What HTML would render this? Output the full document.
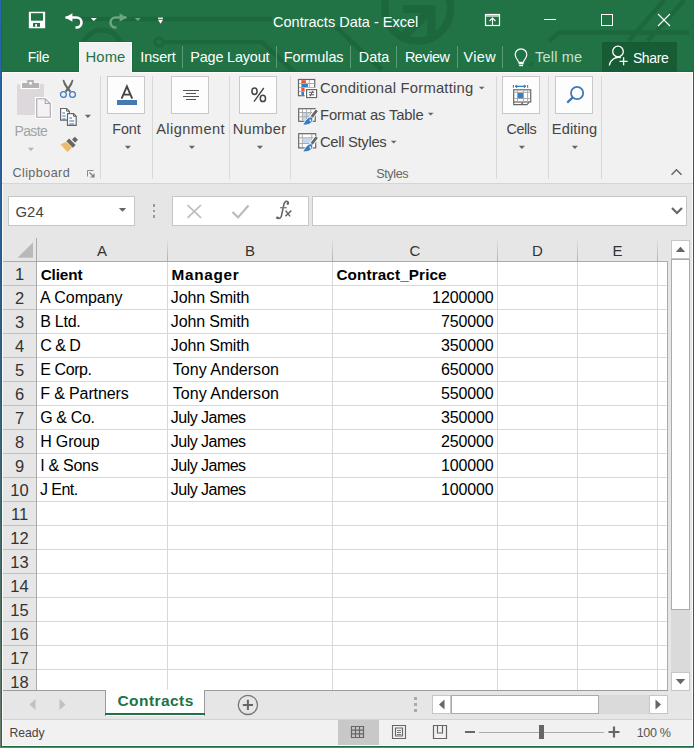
<!DOCTYPE html><html><head><meta charset="utf-8"><style>
html,body{margin:0;padding:0;width:694px;height:748px;overflow:hidden;position:relative}
.t{position:absolute;white-space:nowrap;line-height:20px;font-family:"Liberation Sans",sans-serif}
svg{overflow:visible}
</style></head><body>
<div style="position:absolute;left:0px;top:0px;width:694px;height:748px;background:linear-gradient(#2c66b0 0%,#2a5f8a 40%,#4d6e63 80%,#6f7f70 100%)"></div>
<div style="position:absolute;left:1px;top:0px;width:693px;height:747px;background:#1d6b40"></div>
<div style="position:absolute;left:2px;top:0px;width:691px;height:72px;background:#217346"></div>
<svg style="position:absolute;left:2px;top:0px;" width="691" height="72" viewBox="0 0 691 72">
<g fill="none" stroke="#1d673d" stroke-width="4.5" transform="translate(-2,0)">
<path d="M76 19 H272"/>
<circle cx="102" cy="50" r="20" stroke-width="5"/>
<circle cx="159" cy="42" r="4" stroke-width="3"/>
<path d="M163 42 H262 L294 72"/>
<path d="M336 27 L382 70"/>
<path d="M549 41 L559 32.5 H689"/>
<path d="M628.8 41 L664.3 0"/>
<path d="M647.6 41 L684.3 0"/>
<circle cx="417.7" cy="8" r="33" stroke-width="7.5"/>
<path d="M401 39 L431 9" stroke-width="8.5"/>
<path d="M403 9 H431.3 V37.6" stroke-width="8"/>
</g></svg>
<svg style="position:absolute;left:29px;top:12px;" width="16" height="16" viewBox="0 0 16 16"><path d="M0.5 0.5 H15.5 V15.5 H0.5 Z" fill="none" stroke="#ffffff" stroke-width="1.3"/>
<rect x="0" y="0" width="16" height="16" rx="1" fill="#ffffff"/>
<rect x="2" y="1.2" width="12" height="7.5" fill="#217346"/>
<rect x="4" y="11" width="7" height="3.8" fill="#217346"/>
<rect x="6.2" y="12.1" width="1.8" height="2.7" fill="#ffffff"/></svg>
<svg style="position:absolute;left:62px;top:10px;" width="24" height="20" viewBox="0 0 24 20"><path d="M3.5 7.5 H14.5 A5 5 0 0 1 14.5 17.5 H13.5" fill="none" stroke="#ffffff" stroke-width="2.6"/>
<path d="M3.2 7.5 L10.4 3.2 V11.8 Z" fill="#ffffff"/></svg>
<svg style="position:absolute;left:90px;top:17px;" width="8" height="5" viewBox="0 0 8 5"><path d="M0.8 1 H6.9 L3.85 4 Z" fill="#ffffff"/></svg>
<svg style="position:absolute;left:106px;top:10px;" width="24" height="20" viewBox="0 0 24 20"><path d="M20.5 7.5 H9.5 A5 5 0 0 0 9.5 17.5 H10.5" fill="none" stroke="#6aa583" stroke-width="2.6"/>
<path d="M20.8 7.5 L13.6 3.2 V11.8 Z" fill="#6aa583"/></svg>
<svg style="position:absolute;left:134px;top:17px;" width="8" height="5" viewBox="0 0 8 5"><path d="M0.8 1 H6.9 L3.85 4 Z" fill="#6aa583"/></svg>
<svg style="position:absolute;left:157px;top:16px;" width="8" height="9" viewBox="0 0 8 9"><rect x="1" y="1.6" width="5" height="1.2" fill="#ffffff"/><path d="M1 3.8 H6 L3.5 7.8 Z" fill="#ffffff"/></svg>
<div class="t" style="left:273.00px;top:12.18px;font-size:14.5px;font-weight:normal;color:#ffffff;letter-spacing:0.014px;">Contracts Data - Excel</div>
<svg style="position:absolute;left:484px;top:13px;" width="17" height="14" viewBox="0 0 17 14"><rect x="1.5" y="1.5" width="14" height="11" fill="none" stroke="#ffffff" stroke-width="1.2"/>
<path d="M1.5 3 H15.5" stroke="#ffffff" stroke-width="1.2"/>
<path d="M8.5 4.5 V12.5 M5.5 8 L8.5 5 L11.5 8" fill="none" stroke="#ffffff" stroke-width="1.1"/></svg>
<div style="position:absolute;left:544px;top:19px;width:12px;height:1px;background:#fff"></div>
<div style="position:absolute;left:601px;top:14px;width:12px;height:12px;border:1px solid #fff;box-sizing:border-box"></div>
<svg style="position:absolute;left:657px;top:13px;" width="14" height="14" viewBox="0 0 14 14"><path d="M1 1 L13 13 M13 1 L1 13" stroke="#ffffff" stroke-width="1.1"/></svg>
<div class="t" style="left:27.70px;top:46.85px;font-size:14px;font-weight:normal;color:#ffffff;letter-spacing:-0.267px;">File</div>
<div style="position:absolute;left:2px;top:71px;width:691px;height:1px;background:#1c6a3f"></div>
<div style="position:absolute;left:78px;top:41px;width:55px;height:31px;background:#1c6a3f"></div>
<div style="position:absolute;left:79px;top:42px;width:53px;height:31px;background:#f1f1f1;border:1px solid #fcfcfc;border-bottom:none;box-sizing:border-box"></div>
<div class="t" style="left:85.60px;top:46.57px;font-size:14.8px;font-weight:normal;color:#217346;letter-spacing:0.067px;">Home</div>
<div class="t" style="left:140.30px;top:46.71px;font-size:14.4px;font-weight:normal;color:#ffffff;letter-spacing:-0.100px;">Insert</div>
<div class="t" style="left:190.30px;top:46.71px;font-size:14.4px;font-weight:normal;color:#ffffff;letter-spacing:-0.160px;">Page Layout</div>
<div class="t" style="left:283.80px;top:46.71px;font-size:14.4px;font-weight:normal;color:#ffffff;letter-spacing:-0.029px;">Formulas</div>
<div class="t" style="left:358.80px;top:46.71px;font-size:14.4px;font-weight:normal;color:#ffffff;letter-spacing:0.033px;">Data</div>
<div class="t" style="left:404.90px;top:46.71px;font-size:14.4px;font-weight:normal;color:#ffffff;letter-spacing:-0.440px;">Review</div>
<div class="t" style="left:463.60px;top:46.71px;font-size:14.4px;font-weight:normal;color:#ffffff;letter-spacing:0.367px;">View</div>
<div style="position:absolute;left:182px;top:46px;width:1px;height:22px;background:#5a9a75"></div>
<div style="position:absolute;left:276px;top:46px;width:1px;height:22px;background:#5a9a75"></div>
<div style="position:absolute;left:350px;top:46px;width:1px;height:22px;background:#5a9a75"></div>
<div style="position:absolute;left:396px;top:46px;width:1px;height:22px;background:#5a9a75"></div>
<div style="position:absolute;left:457px;top:46px;width:1px;height:22px;background:#5a9a75"></div>
<div style="position:absolute;left:502px;top:46px;width:1px;height:22px;background:#5a9a75"></div>
<svg style="position:absolute;left:512px;top:46px;" width="22" height="22" viewBox="0 0 22 22"><path d="M6.5 14.5 C6 12 3 10.5 3 6.8 A5.8 5.8 0 0 1 14.6 6.8 C14.6 10.5 11.6 12 11.2 14.5" fill="none" stroke="#ffffff" stroke-width="1.2" transform="translate(0.2,1.8)"/>
<rect x="6.6" y="15.8" width="5" height="2.6" fill="#ffffff"/>
<rect x="7.2" y="19" width="3.8" height="1.2" fill="#ffffff"/>
<path d="M16 19.8 L21 14.5 V19.8 Z" fill="#1c6840"/></svg>
<div class="t" style="left:535.00px;top:46.64px;font-size:14.6px;font-weight:normal;color:#c9e0d1;letter-spacing:0.167px;">Tell me</div>
<div style="position:absolute;left:602px;top:42px;width:75px;height:30px;background:#185c36"></div>
<svg style="position:absolute;left:606px;top:44px;" width="22" height="24" viewBox="0 0 22 24"><circle cx="12" cy="7.5" r="5.3" fill="none" stroke="#ffffff" stroke-width="1.3"/>
<path d="M3.3 21.5 A9.5 9.5 0 0 1 14.8 13.5" fill="none" stroke="#ffffff" stroke-width="1.3"/>
<path d="M17.6 13.3 V21.3 M13.6 17.3 H21.6" stroke="#ffffff" stroke-width="1.3"/></svg>
<div class="t" style="left:632.90px;top:47.65px;font-size:14px;font-weight:normal;color:#ffffff;letter-spacing:-0.375px;">Share</div>
<div style="position:absolute;left:2px;top:72px;width:691px;height:112px;background:#f1f1f1"></div>
<div style="position:absolute;left:2px;top:72px;width:77px;height:1px;background:#fcfcfc"></div>
<div style="position:absolute;left:132px;top:72px;width:561px;height:1px;background:#fcfcfc"></div>
<div style="position:absolute;left:2px;top:72px;width:1px;height:112px;background:#fcfcfc"></div>
<div style="position:absolute;left:692px;top:72px;width:1px;height:112px;background:#fcfcfc"></div>
<div style="position:absolute;left:2px;top:183px;width:691px;height:1px;background:#d6d6d6"></div>
<div style="position:absolute;left:100px;top:76px;width:1px;height:103px;background:#d8d8d8"></div>
<div style="position:absolute;left:152px;top:76px;width:1px;height:103px;background:#d8d8d8"></div>
<div style="position:absolute;left:229px;top:76px;width:1px;height:103px;background:#d8d8d8"></div>
<div style="position:absolute;left:290px;top:76px;width:1px;height:103px;background:#d8d8d8"></div>
<div style="position:absolute;left:496px;top:76px;width:1px;height:103px;background:#d8d8d8"></div>
<div style="position:absolute;left:548px;top:76px;width:1px;height:103px;background:#d8d8d8"></div>
<div style="position:absolute;left:601px;top:76px;width:1px;height:103px;background:#d8d8d8"></div>
<svg style="position:absolute;left:14px;top:78px;" width="40" height="42" viewBox="0 0 40 42">
<rect x="3" y="6" width="27" height="31" rx="1.5" fill="#dcd8db"/>
<rect x="6.5" y="4.5" width="19" height="6.5" fill="#ffffff"/>
<rect x="8" y="5" width="17" height="5" fill="#b4b2b4"/>
<rect x="13.2" y="2" width="6.7" height="4" fill="#b4b2b4"/>
<rect x="15.3" y="4" width="2.5" height="2.5" fill="#ffffff"/>
<path d="M21.7 19.7 H31.6 L37.3 25 V40.2 H21.7 Z" fill="#ffffff" stroke="#ffffff" stroke-width="1.6"/>
<path d="M22.7 20.7 H31.3 L36.3 25.5 V39.2 H22.7 Z" fill="#f5f1f6" stroke="#a9a9a9" stroke-width="1.1"/>
<path d="M31.3 20.7 V25.5 H36.3" fill="none" stroke="#a9a9a9" stroke-width="1.1"/>
</svg>
<div class="t" style="left:14.50px;top:120.85px;font-size:14px;font-weight:normal;color:#a3a3a3;letter-spacing:-0.650px;">Paste</div>
<svg style="position:absolute;left:27px;top:147px;" width="8" height="5" viewBox="0 0 8 5"><path d="M0.8 0.8 H7 L3.9 4 Z" fill="#b5b5b5"/></svg>
<svg style="position:absolute;left:58px;top:78px;" width="20" height="22" viewBox="0 0 20 22">
<path d="M4.6 1.8 L6.2 1.9 C7.4 5 9.2 8 11.4 10.6 L8.8 13.9 L6.6 13.2 L8.6 10.8 C6.5 8 5 5 4.6 1.8 Z" fill="#666"/>
<path d="M15.4 1.8 L13.8 1.9 C12.6 5 10.8 8 8.6 10.6 L11.2 13.9 L13.4 13.2 L11.4 10.8 C13.5 8 15 5 15.4 1.8 Z" fill="#666"/>
<circle cx="5.4" cy="16.5" r="2.9" fill="none" stroke="#3d7cc4" stroke-width="1.3"/>
<circle cx="14.5" cy="16.5" r="2.9" fill="none" stroke="#3d7cc4" stroke-width="1.3"/>
</svg>
<svg style="position:absolute;left:59px;top:107px;" width="20" height="20" viewBox="0 0 20 20">
<path d="M1.6 1.5 H7.6 L10.3 4.2 V13.2 H1.6 Z" fill="#fff" stroke="#666" stroke-width="1.2"/>
<path d="M7.6 1.5 V4.2 H10.3" fill="none" stroke="#666" stroke-width="1"/>
<path d="M3.4 6 H6 M3.4 9 H6.6 M3.4 12 H6.6" stroke="#3d6fb0" stroke-width="1"/>
<path d="M8.5 6.6 H14.5 L17.2 9.3 V18.3 H8.5 Z" fill="#fff" stroke="#666" stroke-width="1.2"/>
<path d="M14.5 6.6 V9.3 H17.2" fill="none" stroke="#666" stroke-width="1"/>
<path d="M10.3 11 H13 M10.3 14 H15.2 M10.3 17 H15.2" stroke="#3d6fb0" stroke-width="1"/>
</svg>
<svg style="position:absolute;left:84px;top:114px;" width="8" height="5" viewBox="0 0 8 5"><path d="M0.8 0.8 H7 L3.9 4 Z" fill="#666"/></svg>
<svg style="position:absolute;left:58px;top:135px;" width="20" height="19" viewBox="0 0 20 19">
<path d="M2.5 9.3 L8 7 L14.1 12.4 L9.4 17 Z" fill="#e9bb6d"/>
<path d="M11.16 3.44 L17.66 9.94 L14.84 12.76 L8.34 6.26 Z" fill="#666"/>
<path d="M16.85 1.73 L19.97 4.85 L17.15 7.67 L14.03 4.55 Z" fill="#666"/>
</svg>
<div class="t" style="left:12.40px;top:163.33px;font-size:12.6px;font-weight:normal;color:#666666;letter-spacing:0.425px;">Clipboard</div>
<svg style="position:absolute;left:86px;top:169px;" width="10" height="10" viewBox="0 0 10 10"><path d="M1.5 1.5 H7.5 M1.5 1.5 V7.5" stroke="#888" stroke-width="1"/><path d="M3.5 3.5 L8 8 M8 4.5 V8 H4.5" fill="none" stroke="#777" stroke-width="1.1"/></svg>
<div style="position:absolute;left:107px;top:76px;width:38px;height:38px;background:#fdfdfd;border:1px solid #c8c8c8;box-sizing:border-box"></div>
<div style="position:absolute;left:171px;top:76px;width:38px;height:38px;background:#fdfdfd;border:1px solid #c8c8c8;box-sizing:border-box"></div>
<div style="position:absolute;left:239px;top:76px;width:38px;height:38px;background:#fdfdfd;border:1px solid #c8c8c8;box-sizing:border-box"></div>
<div style="position:absolute;left:502px;top:76px;width:38px;height:38px;background:#fdfdfd;border:1px solid #c8c8c8;box-sizing:border-box"></div>
<div style="position:absolute;left:555px;top:76px;width:38px;height:38px;background:#fdfdfd;border:1px solid #c8c8c8;box-sizing:border-box"></div>
<svg style="position:absolute;left:116px;top:84px;" width="22" height="22" viewBox="0 0 22 22"><path d="M5.6 14.6 L10.9 2.4 L16.2 14.6 M7.4 10.6 H14.4" fill="none" stroke="#444" stroke-width="1.9"/>
<rect x="1" y="16" width="20" height="5" fill="#4479b4"/></svg>
<div class="t" style="left:112.20px;top:118.85px;font-size:14.3px;font-weight:normal;color:#444444;letter-spacing:0.000px;">Font</div>
<svg style="position:absolute;left:180px;top:86px;" width="22" height="16" viewBox="0 0 22 16"><path d="M3 4.5 H19 M6 7.5 H16 M3 10.5 H19 M6 13.5 H16" stroke="#555" stroke-width="1.1"/></svg>
<div class="t" style="left:156.20px;top:118.74px;font-size:14.6px;font-weight:normal;color:#444444;letter-spacing:0.438px;">Alignment</div>
<svg style="position:absolute;left:248px;top:85px;" width="20" height="20" viewBox="0 0 20 20"><ellipse cx="6.5" cy="6.2" rx="2.6" ry="3.2" fill="none" stroke="#444" stroke-width="1.5"/>
<ellipse cx="14.9" cy="13.4" rx="2.6" ry="3.2" fill="none" stroke="#444" stroke-width="1.5"/>
<path d="M15.8 3 L6 16.6" stroke="#444" stroke-width="1.3"/></svg>
<div class="t" style="left:232.70px;top:118.74px;font-size:14.6px;font-weight:normal;color:#444444;letter-spacing:0.280px;">Number</div>
<svg style="position:absolute;left:124px;top:145px;" width="8" height="5" viewBox="0 0 8 5"><path d="M0.8 0.8 H7 L3.9 4 Z" fill="#666"/></svg>
<svg style="position:absolute;left:188px;top:145px;" width="8" height="5" viewBox="0 0 8 5"><path d="M0.8 0.8 H7 L3.9 4 Z" fill="#666"/></svg>
<svg style="position:absolute;left:256px;top:145px;" width="8" height="5" viewBox="0 0 8 5"><path d="M0.8 0.8 H7 L3.9 4 Z" fill="#666"/></svg>
<svg style="position:absolute;left:296px;top:77px;" width="24" height="24" viewBox="0 0 24 24">
<rect x="2.5" y="2.5" width="16.2" height="16.2" fill="#fff" stroke="#666" stroke-width="1.2"/>
<path d="M5.5 3 V18.5 M13.3 3 V18.5 M3 6.5 H18.5 M3 10.5 H18.5 M3 14.5 H18.5" stroke="#aaa" stroke-width="1"/>
<rect x="5.9" y="3.2" width="4" height="2.8" fill="#e05a2b"/>
<rect x="5.9" y="7" width="6" height="3" fill="#3b7cc1"/>
<rect x="5.9" y="11" width="3" height="3" fill="#e05a2b"/>
<rect x="5.9" y="15" width="2.2" height="3" fill="#3b7cc1"/>
<rect x="9.4" y="11.6" width="11.5" height="9.7" fill="#fff" stroke="#ffffff" stroke-width="1.5"/>
<rect x="10.6" y="12.6" width="10" height="8" fill="#fff" stroke="#666" stroke-width="1.2"/>
<path d="M13 15.3 H18.2 M13 17.8 H18.2 M17 13.8 L14.2 19.4" stroke="#555" stroke-width="1"/>
</svg>
<svg style="position:absolute;left:296px;top:106px;" width="26" height="24" viewBox="0 0 26 24"><rect x="2.7" y="2.7" width="16.5" height="12.6" fill="#fff" stroke="#666" stroke-width="1.2"/>
<rect x="6.6" y="6.5" width="8.5" height="8.5" fill="#c5d9ee"/>
<path d="M6.4 3 V15 M10.6 3 V15 M14.8 3 V15 M3 6.5 H19 M3 10.8 H19" stroke="#aaa" stroke-width="1"/><g transform="translate(0,0)"><path d="M21 4.2 L15 11.8" stroke="#fff" stroke-width="4.6"/>
<path d="M20.8 4.4 L15.2 11.6" stroke="#666" stroke-width="2.8"/>
<path d="M15.6 11 C17.6 12.8 17 16 14 17.8 C12 19 9.5 19.2 6.6 19.2 C8 17 9 14.6 11 12.8 C12.5 11.4 14.4 10.6 15.6 11 Z" fill="#3b7cc1" stroke="#fff" stroke-width="0.9"/>
<path d="M14 13.5 L14.8 15.6" stroke="#fff" stroke-width="1.3"/></g></svg>
<svg style="position:absolute;left:296px;top:131px;" width="26" height="24" viewBox="0 0 26 24"><rect x="2.7" y="2.7" width="17" height="14.2" fill="#fff" stroke="#666" stroke-width="1.2"/>
<rect x="6.6" y="7.2" width="9" height="5" fill="#c5d9ee"/>
<path d="M6.3 3 V16.5 M15.8 3 V16.5 M3 6.8 H19.5 M3 12.5 H19.5" stroke="#aaa" stroke-width="1"/><g transform="translate(0,1.8)"><path d="M21 4.2 L15 11.8" stroke="#fff" stroke-width="4.6"/>
<path d="M20.8 4.4 L15.2 11.6" stroke="#666" stroke-width="2.8"/>
<path d="M15.6 11 C17.6 12.8 17 16 14 17.8 C12 19 9.5 19.2 6.6 19.2 C8 17 9 14.6 11 12.8 C12.5 11.4 14.4 10.6 15.6 11 Z" fill="#3b7cc1" stroke="#fff" stroke-width="0.9"/>
<path d="M14 13.5 L14.8 15.6" stroke="#fff" stroke-width="1.3"/></g></svg>
<div class="t" style="left:319.90px;top:78.37px;font-size:14.8px;font-weight:normal;color:#444444;letter-spacing:0.210px;">Conditional Formatting</div>
<div class="t" style="left:320.00px;top:105.27px;font-size:14.8px;font-weight:normal;color:#444444;letter-spacing:-0.150px;">Format as Table</div>
<div class="t" style="left:320.00px;top:132.37px;font-size:14.8px;font-weight:normal;color:#444444;letter-spacing:-0.320px;">Cell Styles</div>
<svg style="position:absolute;left:477.5px;top:85.5px;" width="8" height="5" viewBox="0 0 8 5"><path d="M0.8 0.8 H6.6 L3.7 3.6 Z" fill="#666"/></svg>
<svg style="position:absolute;left:426.8px;top:112.3px;" width="8" height="5" viewBox="0 0 8 5"><path d="M0.8 0.8 H6.6 L3.7 3.6 Z" fill="#666"/></svg>
<svg style="position:absolute;left:389.8px;top:139.5px;" width="8" height="5" viewBox="0 0 8 5"><path d="M0.8 0.8 H6.6 L3.7 3.6 Z" fill="#666"/></svg>
<div class="t" style="left:376.20px;top:163.63px;font-size:12.6px;font-weight:normal;color:#666666;letter-spacing:-0.380px;">Styles</div>
<svg style="position:absolute;left:510px;top:82px;" width="24" height="25" viewBox="0 0 24 25">
<path d="M3.4 3 V5.8 M17.6 3 V5.8 M5 4.4 H16" stroke="#3b7cc1" stroke-width="1.1"/>
<path d="M5 4.4 L7 3 V5.8 Z M16 4.4 L14 3 V5.8 Z" fill="#3b7cc1" stroke="#3b7cc1" stroke-width="0.6"/>
<rect x="3.7" y="7.8" width="17" height="12.2" fill="#fff" stroke="#666" stroke-width="1.2"/>
<path d="M7.5 8.2 V19.6 M13.5 8.2 V19.6 M17.6 8.2 V19.6 M4 10.3 H20.3 M4 16.5 H20.3" stroke="#aaa" stroke-width="1"/>
<rect x="7.9" y="10.9" width="5.2" height="5.2" fill="#3b7cc1"/>
<path d="M3.7 20 V22.6 H11 L13 20.5 M11.5 22.6 H17 L19.2 20.2" fill="none" stroke="#666" stroke-width="1.1"/>
</svg>
<div class="t" style="left:506.50px;top:118.81px;font-size:14.4px;font-weight:normal;color:#444444;letter-spacing:-0.425px;">Cells</div>
<svg style="position:absolute;left:563px;top:83px;" width="24" height="24" viewBox="0 0 24 24"><circle cx="14.1" cy="10" r="6.1" fill="none" stroke="#3f78b8" stroke-width="1.8"/>
<path d="M4.2 19.6 L9.8 14.4" stroke="#3f78b8" stroke-width="2.2"/></svg>
<div class="t" style="left:551.80px;top:118.74px;font-size:14.6px;font-weight:normal;color:#444444;letter-spacing:0.133px;">Editing</div>
<svg style="position:absolute;left:518px;top:145px;" width="8" height="5" viewBox="0 0 8 5"><path d="M0.8 0.8 H7 L3.9 4 Z" fill="#666"/></svg>
<svg style="position:absolute;left:571px;top:145px;" width="8" height="5" viewBox="0 0 8 5"><path d="M0.8 0.8 H7 L3.9 4 Z" fill="#666"/></svg>
<svg style="position:absolute;left:670px;top:167px;" width="14" height="10" viewBox="0 0 14 10"><path d="M1.5 7.8 L6.5 2.8 L11.5 7.8" fill="none" stroke="#666" stroke-width="1.5"/></svg>
<div style="position:absolute;left:2px;top:184px;width:691px;height:562px;background:#e6e6e6"></div>
<div style="position:absolute;left:8px;top:196px;width:127px;height:30px;background:#fff;border:1px solid #c6c6c6;box-sizing:border-box"></div>
<div class="t" style="left:15.50px;top:202.07px;font-size:14.8px;font-weight:normal;color:#444444;letter-spacing:0.100px;">G24</div>
<svg style="position:absolute;left:118px;top:207px;" width="10" height="6" viewBox="0 0 10 6"><path d="M0.8 1 H8.2 L4.5 4.8 Z" fill="#666"/></svg>
<div style="position:absolute;left:152.5px;top:204px;width:2.5px;height:2.5px;background:#999"></div>
<div style="position:absolute;left:152.5px;top:209.5px;width:2.5px;height:2.5px;background:#999"></div>
<div style="position:absolute;left:152.5px;top:215px;width:2.5px;height:2.5px;background:#999"></div>
<div style="position:absolute;left:172px;top:196px;width:137px;height:30px;background:#fff;border:1px solid #c6c6c6;box-sizing:border-box"></div>
<svg style="position:absolute;left:186px;top:204px;" width="17" height="15" viewBox="0 0 17 15"><path d="M1.5 1 L15 13.8 M15 1 L1.5 13.8" stroke="#bbb" stroke-width="1.7"/></svg>
<svg style="position:absolute;left:231px;top:204px;" width="19" height="15" viewBox="0 0 19 15"><path d="M1.5 8 L7 13.4 L17.5 1.5" fill="none" stroke="#bbb" stroke-width="2.2"/></svg>
<svg style="position:absolute;left:270px;top:196px;" width="28" height="28" viewBox="0 0 28 28"><path d="M18.2 7.6 C18.6 5.8 17.4 5 16.1 5.3 C14.6 5.7 14.1 7.2 13.7 9.2 L11.5 19.6 C11 22 9.6 22.9 7.2 22.1" fill="none" stroke="#666" stroke-width="1.6"/>
<circle cx="17.8" cy="7.6" r="1.3" fill="#666"/><circle cx="7.4" cy="21.8" r="1.4" fill="#666"/>
<path d="M10.2 11.7 H16.7" stroke="#777" stroke-width="1.3"/>
<path d="M15.6 14.6 L20.1 20.4 M21.3 14.6 L15.4 20.3" stroke="#666" stroke-width="1.5"/></svg>
<div style="position:absolute;left:312px;top:196px;width:375px;height:30px;background:#fff;border:1px solid #c6c6c6;box-sizing:border-box"></div>
<svg style="position:absolute;left:670px;top:206px;" width="14" height="10" viewBox="0 0 14 10"><path d="M2 2 L7 7 L12 2" fill="none" stroke="#666" stroke-width="2.2"/></svg>
<div style="position:absolute;left:37px;top:262px;width:630px;height:428px;background:#ffffff"></div>
<div style="position:absolute;left:167px;top:262px;width:1px;height:428px;background:#d9d9d9"></div>
<div style="position:absolute;left:167px;top:238px;width:1px;height:23px;background:linear-gradient(#e6e6e6,#b0b0b0)"></div>
<div style="position:absolute;left:332px;top:262px;width:1px;height:428px;background:#d9d9d9"></div>
<div style="position:absolute;left:332px;top:238px;width:1px;height:23px;background:linear-gradient(#e6e6e6,#b0b0b0)"></div>
<div style="position:absolute;left:497px;top:262px;width:1px;height:428px;background:#d9d9d9"></div>
<div style="position:absolute;left:497px;top:238px;width:1px;height:23px;background:linear-gradient(#e6e6e6,#b0b0b0)"></div>
<div style="position:absolute;left:577px;top:262px;width:1px;height:428px;background:#d9d9d9"></div>
<div style="position:absolute;left:577px;top:238px;width:1px;height:23px;background:linear-gradient(#e6e6e6,#b0b0b0)"></div>
<div style="position:absolute;left:657px;top:262px;width:1px;height:428px;background:#d9d9d9"></div>
<div style="position:absolute;left:657px;top:238px;width:1px;height:23px;background:linear-gradient(#e6e6e6,#b0b0b0)"></div>
<div style="position:absolute;left:37px;top:285px;width:630px;height:1px;background:#d9d9d9"></div>
<div style="position:absolute;left:2px;top:285px;width:34px;height:1px;background:#c0c0c0"></div>
<div style="position:absolute;left:37px;top:309px;width:630px;height:1px;background:#d9d9d9"></div>
<div style="position:absolute;left:2px;top:309px;width:34px;height:1px;background:#c0c0c0"></div>
<div style="position:absolute;left:37px;top:333px;width:630px;height:1px;background:#d9d9d9"></div>
<div style="position:absolute;left:2px;top:333px;width:34px;height:1px;background:#c0c0c0"></div>
<div style="position:absolute;left:37px;top:357px;width:630px;height:1px;background:#d9d9d9"></div>
<div style="position:absolute;left:2px;top:357px;width:34px;height:1px;background:#c0c0c0"></div>
<div style="position:absolute;left:37px;top:381px;width:630px;height:1px;background:#d9d9d9"></div>
<div style="position:absolute;left:2px;top:381px;width:34px;height:1px;background:#c0c0c0"></div>
<div style="position:absolute;left:37px;top:405px;width:630px;height:1px;background:#d9d9d9"></div>
<div style="position:absolute;left:2px;top:405px;width:34px;height:1px;background:#c0c0c0"></div>
<div style="position:absolute;left:37px;top:429px;width:630px;height:1px;background:#d9d9d9"></div>
<div style="position:absolute;left:2px;top:429px;width:34px;height:1px;background:#c0c0c0"></div>
<div style="position:absolute;left:37px;top:453px;width:630px;height:1px;background:#d9d9d9"></div>
<div style="position:absolute;left:2px;top:453px;width:34px;height:1px;background:#c0c0c0"></div>
<div style="position:absolute;left:37px;top:477px;width:630px;height:1px;background:#d9d9d9"></div>
<div style="position:absolute;left:2px;top:477px;width:34px;height:1px;background:#c0c0c0"></div>
<div style="position:absolute;left:37px;top:501px;width:630px;height:1px;background:#d9d9d9"></div>
<div style="position:absolute;left:2px;top:501px;width:34px;height:1px;background:#c0c0c0"></div>
<div style="position:absolute;left:37px;top:525px;width:630px;height:1px;background:#d9d9d9"></div>
<div style="position:absolute;left:2px;top:525px;width:34px;height:1px;background:#c0c0c0"></div>
<div style="position:absolute;left:37px;top:549px;width:630px;height:1px;background:#d9d9d9"></div>
<div style="position:absolute;left:2px;top:549px;width:34px;height:1px;background:#c0c0c0"></div>
<div style="position:absolute;left:37px;top:573px;width:630px;height:1px;background:#d9d9d9"></div>
<div style="position:absolute;left:2px;top:573px;width:34px;height:1px;background:#c0c0c0"></div>
<div style="position:absolute;left:37px;top:597px;width:630px;height:1px;background:#d9d9d9"></div>
<div style="position:absolute;left:2px;top:597px;width:34px;height:1px;background:#c0c0c0"></div>
<div style="position:absolute;left:37px;top:621px;width:630px;height:1px;background:#d9d9d9"></div>
<div style="position:absolute;left:2px;top:621px;width:34px;height:1px;background:#c0c0c0"></div>
<div style="position:absolute;left:37px;top:645px;width:630px;height:1px;background:#d9d9d9"></div>
<div style="position:absolute;left:2px;top:645px;width:34px;height:1px;background:#c0c0c0"></div>
<div style="position:absolute;left:37px;top:669px;width:630px;height:1px;background:#d9d9d9"></div>
<div style="position:absolute;left:2px;top:669px;width:34px;height:1px;background:#c0c0c0"></div>
<div style="position:absolute;left:36px;top:238px;width:1px;height:452px;background:#ababab"></div>
<div style="position:absolute;left:2px;top:261px;width:665px;height:1px;background:#ababab"></div>
<div style="position:absolute;left:667px;top:261px;width:1px;height:430px;background:#ababab"></div>
<div style="position:absolute;left:2px;top:690px;width:103px;height:1px;background:#9b9b9b"></div>
<div style="position:absolute;left:204px;top:690px;width:464px;height:1px;background:#9b9b9b"></div>
<svg style="position:absolute;left:17px;top:242px;" width="17" height="16" viewBox="0 0 17 16"><path d="M16 0.5 V15.8 H0.5 Z" fill="#b9b9b9"/></svg>
<div class="t" style="left:97.00px;top:240.80px;font-size:15px;font-weight:normal;color:#333333;letter-spacing:0.000px;">A</div>
<div class="t" style="left:245.00px;top:240.80px;font-size:15px;font-weight:normal;color:#333333;letter-spacing:0.000px;">B</div>
<div class="t" style="left:409.60px;top:240.80px;font-size:15px;font-weight:normal;color:#333333;letter-spacing:0.000px;">C</div>
<div class="t" style="left:532.10px;top:240.80px;font-size:15px;font-weight:normal;color:#333333;letter-spacing:0.000px;">D</div>
<div class="t" style="left:612.50px;top:240.80px;font-size:15px;font-weight:normal;color:#333333;letter-spacing:0.000px;">E</div>
<div class="t" style="left:14.90px;top:264.48px;font-size:16.5px;font-weight:normal;color:#333333;letter-spacing:0.000px;">1</div>
<div class="t" style="left:14.90px;top:288.48px;font-size:16.5px;font-weight:normal;color:#333333;letter-spacing:0.000px;">2</div>
<div class="t" style="left:14.90px;top:312.48px;font-size:16.5px;font-weight:normal;color:#333333;letter-spacing:0.000px;">3</div>
<div class="t" style="left:14.90px;top:336.48px;font-size:16.5px;font-weight:normal;color:#333333;letter-spacing:0.000px;">4</div>
<div class="t" style="left:14.90px;top:360.48px;font-size:16.5px;font-weight:normal;color:#333333;letter-spacing:0.000px;">5</div>
<div class="t" style="left:14.90px;top:384.48px;font-size:16.5px;font-weight:normal;color:#333333;letter-spacing:0.000px;">6</div>
<div class="t" style="left:14.90px;top:408.48px;font-size:16.5px;font-weight:normal;color:#333333;letter-spacing:0.000px;">7</div>
<div class="t" style="left:14.90px;top:432.48px;font-size:16.5px;font-weight:normal;color:#333333;letter-spacing:0.000px;">8</div>
<div class="t" style="left:14.90px;top:456.48px;font-size:16.5px;font-weight:normal;color:#333333;letter-spacing:0.000px;">9</div>
<div class="t" style="left:10.30px;top:480.48px;font-size:16.5px;font-weight:normal;color:#333333;letter-spacing:0.000px;">10</div>
<div class="t" style="left:10.95px;top:504.48px;font-size:16.5px;font-weight:normal;color:#333333;letter-spacing:0.000px;">11</div>
<div class="t" style="left:10.30px;top:528.48px;font-size:16.5px;font-weight:normal;color:#333333;letter-spacing:0.000px;">12</div>
<div class="t" style="left:10.30px;top:552.48px;font-size:16.5px;font-weight:normal;color:#333333;letter-spacing:0.000px;">13</div>
<div class="t" style="left:10.30px;top:576.48px;font-size:16.5px;font-weight:normal;color:#333333;letter-spacing:0.000px;">14</div>
<div class="t" style="left:10.30px;top:600.48px;font-size:16.5px;font-weight:normal;color:#333333;letter-spacing:0.000px;">15</div>
<div class="t" style="left:10.30px;top:624.48px;font-size:16.5px;font-weight:normal;color:#333333;letter-spacing:0.000px;">16</div>
<div class="t" style="left:10.30px;top:648.48px;font-size:16.5px;font-weight:normal;color:#333333;letter-spacing:0.000px;">17</div>
<div class="t" style="left:10.30px;top:672.48px;font-size:16.5px;font-weight:normal;color:#333333;letter-spacing:0.000px;">18</div>
<div class="t" style="left:40.70px;top:264.50px;font-size:15.3px;font-weight:bold;color:#000;letter-spacing:-0.140px;">Client</div>
<div class="t" style="left:171.60px;top:264.50px;font-size:15.3px;font-weight:bold;color:#000;letter-spacing:0.700px;">Manager</div>
<div class="t" style="left:336.40px;top:264.50px;font-size:15.3px;font-weight:bold;color:#000;letter-spacing:0.108px;">Contract_Price</div>
<div class="t" style="left:40.10px;top:288.46px;font-size:16px;font-weight:normal;color:#000;letter-spacing:-0.037px;">A Company</div>
<div class="t" style="left:170.80px;top:288.46px;font-size:16px;font-weight:normal;color:#000;letter-spacing:-0.156px;">John Smith</div>
<div class="t" style="left:432.10px;top:288.46px;font-size:16px;font-weight:normal;color:#000;letter-spacing:-0.117px;">1200000</div>
<div class="t" style="left:40.20px;top:312.46px;font-size:16px;font-weight:normal;color:#000;letter-spacing:-0.240px;">B Ltd.</div>
<div class="t" style="left:170.80px;top:312.46px;font-size:16px;font-weight:normal;color:#000;letter-spacing:-0.156px;">John Smith</div>
<div class="t" style="left:440.90px;top:312.46px;font-size:16px;font-weight:normal;color:#000;letter-spacing:-0.120px;">750000</div>
<div class="t" style="left:40.20px;top:336.46px;font-size:16px;font-weight:normal;color:#000;letter-spacing:-0.525px;">C &amp; D</div>
<div class="t" style="left:170.80px;top:336.46px;font-size:16px;font-weight:normal;color:#000;letter-spacing:-0.156px;">John Smith</div>
<div class="t" style="left:440.90px;top:336.46px;font-size:16px;font-weight:normal;color:#000;letter-spacing:-0.120px;">350000</div>
<div class="t" style="left:40.20px;top:360.46px;font-size:16px;font-weight:normal;color:#000;letter-spacing:-0.400px;">E Corp.</div>
<div class="t" style="left:172.80px;top:360.46px;font-size:16px;font-weight:normal;color:#000;letter-spacing:0.025px;">Tony Anderson</div>
<div class="t" style="left:440.90px;top:360.46px;font-size:16px;font-weight:normal;color:#000;letter-spacing:-0.120px;">650000</div>
<div class="t" style="left:40.20px;top:384.46px;font-size:16px;font-weight:normal;color:#000;letter-spacing:-0.118px;">F &amp; Partners</div>
<div class="t" style="left:172.80px;top:384.46px;font-size:16px;font-weight:normal;color:#000;letter-spacing:0.025px;">Tony Anderson</div>
<div class="t" style="left:440.90px;top:384.46px;font-size:16px;font-weight:normal;color:#000;letter-spacing:-0.120px;">550000</div>
<div class="t" style="left:40.20px;top:408.46px;font-size:16px;font-weight:normal;color:#000;letter-spacing:-0.367px;">G &amp; Co.</div>
<div class="t" style="left:170.80px;top:408.46px;font-size:16px;font-weight:normal;color:#000;letter-spacing:-0.522px;">July James</div>
<div class="t" style="left:440.90px;top:408.46px;font-size:16px;font-weight:normal;color:#000;letter-spacing:-0.120px;">350000</div>
<div class="t" style="left:40.20px;top:432.46px;font-size:16px;font-weight:normal;color:#000;letter-spacing:-0.167px;">H Group</div>
<div class="t" style="left:170.80px;top:432.46px;font-size:16px;font-weight:normal;color:#000;letter-spacing:-0.522px;">July James</div>
<div class="t" style="left:440.90px;top:432.46px;font-size:16px;font-weight:normal;color:#000;letter-spacing:-0.120px;">250000</div>
<div class="t" style="left:40.20px;top:456.46px;font-size:16px;font-weight:normal;color:#000;letter-spacing:-0.286px;">I &amp; Sons</div>
<div class="t" style="left:170.80px;top:456.46px;font-size:16px;font-weight:normal;color:#000;letter-spacing:-0.522px;">July James</div>
<div class="t" style="left:440.90px;top:456.46px;font-size:16px;font-weight:normal;color:#000;letter-spacing:-0.120px;">100000</div>
<div class="t" style="left:39.90px;top:480.46px;font-size:16px;font-weight:normal;color:#000;letter-spacing:-0.540px;">J Ent.</div>
<div class="t" style="left:170.80px;top:480.46px;font-size:16px;font-weight:normal;color:#000;letter-spacing:-0.522px;">July James</div>
<div class="t" style="left:440.90px;top:480.46px;font-size:16px;font-weight:normal;color:#000;letter-spacing:-0.120px;">100000</div>
<div style="position:absolute;left:671px;top:240px;width:19px;height:19px;background:#fff;border:1px solid #c6c6c6;box-sizing:border-box"></div>
<svg style="position:absolute;left:675px;top:246px;" width="11" height="7" viewBox="0 0 11 7"><path d="M0.8 6 L5.5 0.8 L10.2 6 Z" fill="#666"/></svg>
<div style="position:absolute;left:671px;top:259px;width:19px;height:413px;background:#dadada"></div>
<div style="position:absolute;left:671px;top:259px;width:19px;height:351px;background:#fff;border:1px solid #ababab;box-sizing:border-box"></div>
<div style="position:absolute;left:671px;top:672px;width:19px;height:19px;background:#fff;border:1px solid #c6c6c6;box-sizing:border-box"></div>
<svg style="position:absolute;left:675px;top:678px;" width="11" height="7" viewBox="0 0 11 7"><path d="M0.8 1 L5.5 6.2 L10.2 1 Z" fill="#666"/></svg>
<svg style="position:absolute;left:28px;top:698px;" width="9" height="13" viewBox="0 0 9 13"><path d="M7.5 1 V12 L1.5 6.5 Z" fill="#c0c0c0"/></svg>
<svg style="position:absolute;left:58px;top:698px;" width="9" height="13" viewBox="0 0 9 13"><path d="M1.5 1 V12 L7.5 6.5 Z" fill="#c0c0c0"/></svg>
<div style="position:absolute;left:105px;top:690px;width:100px;height:26px;background:#fff;border-left:1px solid #9b9b9b;border-right:1px solid #9b9b9b;box-sizing:border-box"></div>
<div style="position:absolute;left:105px;top:713px;width:100px;height:2px;background:#217346"></div>
<div class="t" style="left:117.50px;top:691.23px;font-size:15.5px;font-weight:bold;color:#217346;letter-spacing:0.425px;">Contracts</div>
<svg style="position:absolute;left:237px;top:694px;" width="22" height="22" viewBox="0 0 22 22"><circle cx="10.9" cy="10.9" r="9.6" fill="none" stroke="#777" stroke-width="1.3"/><path d="M10.9 5.8 V16 M5.8 10.9 H16" stroke="#666" stroke-width="2"/></svg>
<div style="position:absolute;left:414px;top:697px;width:3px;height:3px;background:#aaa"></div>
<div style="position:absolute;left:414px;top:703px;width:3px;height:3px;background:#aaa"></div>
<div style="position:absolute;left:414px;top:709px;width:3px;height:3px;background:#aaa"></div>
<div style="position:absolute;left:432px;top:695px;width:19px;height:19px;background:#fff;border:1px solid #c6c6c6;box-sizing:border-box"></div>
<svg style="position:absolute;left:437px;top:699px;" width="9" height="11" viewBox="0 0 9 11"><path d="M7.5 0.5 V10.5 L2 5.5 Z" fill="#666"/></svg>
<div style="position:absolute;left:451px;top:695px;width:199px;height:19px;background:#dadada"></div>
<div style="position:absolute;left:451px;top:695px;width:148px;height:19px;background:#fff;border:1px solid #ababab;box-sizing:border-box"></div>
<div style="position:absolute;left:649px;top:695px;width:19px;height:19px;background:#fff;border:1px solid #c6c6c6;box-sizing:border-box"></div>
<svg style="position:absolute;left:654px;top:699px;" width="9" height="11" viewBox="0 0 9 11"><path d="M1.5 0.5 V10.5 L7 5.5 Z" fill="#666"/></svg>
<div style="position:absolute;left:2px;top:719px;width:691px;height:1px;background:#d2d2d2"></div>
<div style="position:absolute;left:2px;top:720px;width:691px;height:26px;background:#f1f1f1"></div>
<div class="t" style="left:9.60px;top:722.57px;font-size:12.2px;font-weight:normal;color:#444444;letter-spacing:-0.050px;">Ready</div>
<div style="position:absolute;left:338px;top:720px;width:41px;height:25px;background:#c8c8c8"></div>
<svg style="position:absolute;left:350px;top:725px;" width="15" height="14" viewBox="0 0 15 14"><path d="M1.5 1.5 H13.5 V12.5 H1.5 Z M5.5 1.5 V12.5 M9.5 1.5 V12.5 M1.5 5.2 H13.5 M1.5 8.8 H13.5" fill="none" stroke="#666" stroke-width="1.2"/></svg>
<svg style="position:absolute;left:391px;top:724px;" width="16" height="16" viewBox="0 0 16 16"><path d="M1.5 1.5 H14.5 V14.5 H1.5 Z M4.5 4 H11.5 V12 H4.5 Z" fill="none" stroke="#666" stroke-width="1.1"/><path d="M6 6.5 H10 M6 8.5 H10 M6 10.5 H10" stroke="#666" stroke-width="0.9"/></svg>
<svg style="position:absolute;left:432px;top:724px;" width="16" height="16" viewBox="0 0 16 16"><path d="M1.5 1.5 H14.5 V14.5 H1.5 Z M5.5 1.5 V9 H10.5 V1.5" fill="none" stroke="#666" stroke-width="1.2"/></svg>
<div style="position:absolute;left:465px;top:731px;width:10px;height:2.2px;background:#666"></div>
<div style="position:absolute;left:479px;top:732px;width:125px;height:1px;background:#aaa"></div>
<div style="position:absolute;left:539px;top:725px;width:5px;height:13.5px;background:#666"></div>
<svg style="position:absolute;left:607px;top:725px;" width="14" height="14" viewBox="0 0 14 14"><path d="M7 1.5 V12.5 M1.5 7 H12.5" stroke="#666" stroke-width="2.2"/></svg>
<div class="t" style="left:636.70px;top:722.83px;font-size:12.6px;font-weight:normal;color:#555555;letter-spacing:-0.350px;">100 %</div>
<div style="position:absolute;left:2px;top:745px;width:691px;height:1px;background:#fcfcfc"></div>
<div style="position:absolute;left:2px;top:184px;width:1px;height:562px;background:#fcfcfc"></div>
<div style="position:absolute;left:692px;top:184px;width:1px;height:562px;background:#fcfcfc"></div>
</body></html>
